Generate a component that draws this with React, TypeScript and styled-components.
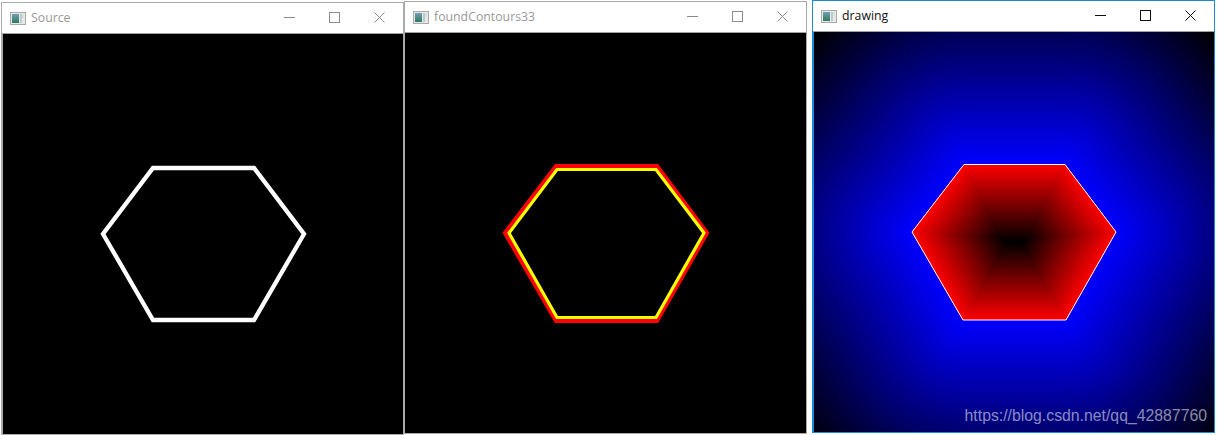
import styled, { createGlobalStyle } from "styled-components";

const GlobalStyle = createGlobalStyle`
  html, body {
    margin: 0;
    background: #fff;
    overflow: hidden;
  }
`;

const Desk = styled.div`
  display: flex;
  align-items: flex-start;
  width: 1217px;
  height: 435px;
  padding-left: 1px;
  box-sizing: border-box;
`;

const Window = styled.div<{ $top: number; $gap: number; $border: string }>`
  width: 403px;
  flex: none;
  box-sizing: border-box;
  margin-top: ${(p) => p.$top}px;
  margin-left: ${(p) => p.$gap}px;
  border: 1px solid ${(p) => p.$border};
  background: #fff;
`;

const TitleBar = styled.div`
  display: flex;
  align-items: center;
  height: 30px;
  padding-left: 8px;
  border-bottom: 1px solid #a0a0a0;
`;

const AppIcon = styled.svg`
  display: block;
  flex: none;
  margin-right: 5px;
`;

const Title = styled.span<{ $active: boolean }>`
  flex: 1;
  font-family: "Open Sans", "Noto Sans", sans-serif;
  font-size: 12.3px;
  line-height: 16px;
  color: ${(p) => (p.$active ? "#111" : "#999")};
`;

const CaptionButton = styled.div<{ $active: boolean }>`
  display: flex;
  align-items: center;
  justify-content: center;
  width: 45px;
  height: 30px;
  flex: none;
  margin-top: -1px;
  color: ${(p) => (p.$active ? "#111" : "#8c8c8c")};
`;

const Captions = styled.div`
  display: flex;
  padding-right: 1px;
`;

const Canvas = styled.div<{ $edge?: string }>`
  position: relative;
  width: 401px;
  height: 400px;
  background: #000;

  &::after {
    content: "";
    position: absolute;
    left: 0;
    top: 0;
    bottom: 0;
    width: 1px;
    background: ${(p) => p.$edge ?? "transparent"};
  }
`;

const Picture = styled.svg`
  display: block;
`;

const Watermark = styled.span`
  position: absolute;
  right: 7px;
  bottom: 7px;
  font-family: "Liberation Sans", Arial, sans-serif;
  font-size: 15.8px;
  line-height: 18px;
  color: rgba(255, 255, 255, 0.55);
  white-space: nowrap;
`;

type Pt = [number, number];
const toPoints = (pts: Pt[]) => pts.map((p) => p.join(",")).join(" ");

const sourceHex: Pt[] = [[151, 134], [252, 134], [302, 200], [252, 286], [151, 286], [101, 200]];
const redHex: Pt[] = [[151, 133], [252, 133], [302, 200], [252, 288], [151, 288], [100, 200]];
const yellowHex: Pt[] = [[152, 136.5], [251, 136.5], [299, 200], [251, 284.5], [152, 284.5], [104, 200]];
const fieldHex: Pt[] = [[151, 132.5], [252, 132.5], [303, 200], [253, 288], [150, 288], [99, 200]];

const MAX_OUT = 200;
const MAX_IN = 78;

const range = (max: number) => Array.from({ length: max }, (_, i) => max - i);

function SourceImage() {
  return (
    <Picture width="401" height="400" viewBox="0 0 401 400">
      <polygon points={toPoints(sourceHex)} fill="none" stroke="#fff" strokeWidth="4.3" />
    </Picture>
  );
}

function ContoursImage() {
  return (
    <Picture width="401" height="400" viewBox="0 0 401 400">
      <polygon points={toPoints(redHex)} fill="none" stroke="#f00" strokeWidth="4.2" />
      <polygon points={toPoints(yellowHex)} fill="none" stroke="#ff0" strokeWidth="3.2" />
    </Picture>
  );
}

// distance field: each stroke covers everything within d of the outline, so painting far to near gives the gradient
function DrawingImage() {
  const pts = toPoints(fieldHex);
  return (
    <Picture width="401" height="400" viewBox="0 0 401 400">
      <defs>
        <clipPath id="inside">
          <polygon points={pts} />
        </clipPath>
      </defs>
      {range(MAX_OUT).map((d) => (
        <polygon
          key={d}
          points={pts}
          fill="none"
          stroke={`rgb(0,0,${Math.round(255 - (d * 255) / MAX_OUT)})`}
          strokeWidth={d * 2}
          strokeLinejoin="round"
        />
      ))}
      <polygon points={pts} fill="#000" />
      <g clipPath="url(#inside)">
        {range(MAX_IN).map((d) => (
          <polygon
            key={d}
            points={pts}
            fill="none"
            stroke={`rgb(${Math.round(255 - (d * 255) / MAX_IN)},0,0)`}
            strokeWidth={d * 2}
            strokeLinejoin="round"
          />
        ))}
      </g>
      <polygon points={pts} fill="none" stroke="#fff" strokeWidth="1" />
    </Picture>
  );
}

function WindowIcon({ id }: { id: string }) {
  return (
    <AppIcon width="16" height="13" viewBox="0 0 16 13">
      <defs>
        <linearGradient id={id} x1="0" y1="0" x2="0" y2="1">
          <stop offset="0" stopColor="#6f9fb5" />
          <stop offset="1" stopColor="#2f7a5c" />
        </linearGradient>
      </defs>
      <rect x="0.5" y="0.5" width="15" height="12" fill="#e8e8e8" stroke="#a9a9a9" />
      <rect x="2" y="2" width="7" height="9" fill={`url(#${id})`} />
      <rect x="10" y="2" width="2" height="9" fill="#b9cdd0" />
      <rect x="12" y="2" width="2" height="4" fill="#d5e4d8" />
    </AppIcon>
  );
}

function Caption({ active }: { active: boolean }) {
  return (
    <Captions>
      <CaptionButton $active={active}>
        <svg width="11" height="11" viewBox="0 0 11 11">
          <path d="M0 5.5H11" stroke="currentColor" strokeWidth="1" />
        </svg>
      </CaptionButton>
      <CaptionButton $active={active}>
        <svg width="11" height="11" viewBox="0 0 11 11">
          <rect x="0.5" y="0.5" width="10" height="10" fill="none" stroke="currentColor" />
        </svg>
      </CaptionButton>
      <CaptionButton $active={active}>
        <svg width="11" height="11" viewBox="0 0 11 11">
          <path d="M0.5 0.5L10.5 10.5M10.5 0.5L0.5 10.5" stroke="currentColor" strokeWidth="1" />
        </svg>
      </CaptionButton>
    </Captions>
  );
}

export default function App() {
  return (
    <>
      <GlobalStyle />
      <Desk>
        <Window $top={2} $gap={0} $border="#aaaaaa">
          <TitleBar>
            <WindowIcon id="icon-source" />
            <Title $active={false}>Source</Title>
            <Caption active={false} />
          </TitleBar>
          <Canvas $edge="#aaaaaa">
            <SourceImage />
          </Canvas>
        </Window>
        <Window $top={1} $gap={0} $border="#aaaaaa">
          <TitleBar>
            <WindowIcon id="icon-contours" />
            <Title $active={false}>foundContours33</Title>
            <Caption active={false} />
          </TitleBar>
          <Canvas>
            <ContoursImage />
          </Canvas>
        </Window>
        <Window $top={0} $gap={5} $border="#1a8ad8">
          <TitleBar>
            <WindowIcon id="icon-drawing" />
            <Title $active>drawing</Title>
            <Caption active />
          </TitleBar>
          <Canvas $edge="#1a8ad8">
            <DrawingImage />
            <Watermark>https://blog.csdn.net/qq_42887760</Watermark>
          </Canvas>
        </Window>
      </Desk>
    </>
  );
}
